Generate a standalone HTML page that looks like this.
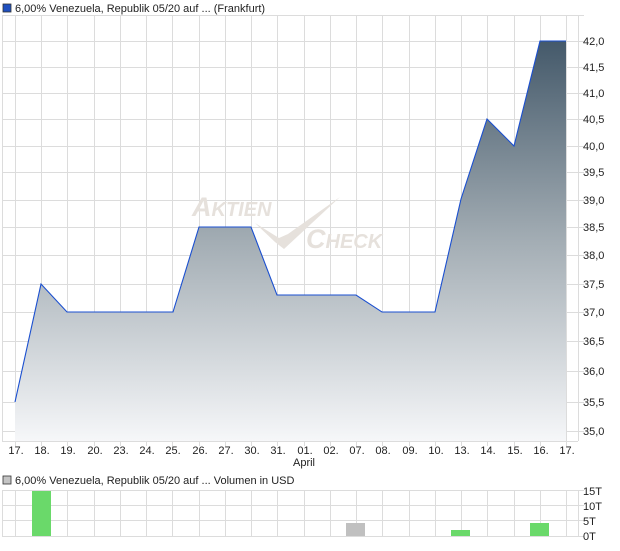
<!DOCTYPE html><html><head><style>body{margin:0;background:#fff;width:620px;height:546px;overflow:hidden;font-family:"Liberation Sans",sans-serif}</style></head><body>
<svg width="620" height="546" xmlns="http://www.w3.org/2000/svg" font-family="Liberation Sans, sans-serif" font-size="11" fill="#222">
<defs><linearGradient id="g" gradientUnits="userSpaceOnUse" x1="0" y1="41" x2="0" y2="441"><stop offset="0" stop-color="#44596a"/><stop offset="0.5" stop-color="#a3adb4"/><stop offset="1" stop-color="#f6f7f9"/></linearGradient></defs>
<rect x="3" y="4" width="8" height="8" fill="#1f4fbf" stroke="#333" stroke-width="0.8"/>
<text x="15" y="12">6,00% Venezuela, Republik 05/20 auf ... (Frankfurt)</text>
<g stroke="#dcdcdc">
<line x1="2.5" y1="15" x2="2.5" y2="441"/><line x1="2" y1="441.5" x2="578" y2="441.5"/><line x1="578.5" y1="15" x2="578.5" y2="441"/>
<line x1="2" y1="15.5" x2="584" y2="15.5"/>
<line x1="2" y1="41.5" x2="584" y2="41.5"/><line x1="2" y1="67.5" x2="584" y2="67.5"/><line x1="2" y1="93.5" x2="584" y2="93.5"/><line x1="2" y1="119.5" x2="584" y2="119.5"/><line x1="2" y1="146.5" x2="584" y2="146.5"/><line x1="2" y1="172.5" x2="584" y2="172.5"/><line x1="2" y1="200.5" x2="584" y2="200.5"/><line x1="2" y1="227.5" x2="584" y2="227.5"/><line x1="2" y1="255.5" x2="584" y2="255.5"/><line x1="2" y1="284.5" x2="584" y2="284.5"/><line x1="2" y1="312.5" x2="584" y2="312.5"/><line x1="2" y1="341.5" x2="584" y2="341.5"/><line x1="2" y1="371.5" x2="584" y2="371.5"/><line x1="2" y1="402.5" x2="584" y2="402.5"/><line x1="2" y1="431.5" x2="584" y2="431.5"/>
<line x1="15.5" y1="15" x2="15.5" y2="446"/><line x1="41.5" y1="15" x2="41.5" y2="446"/><line x1="67.5" y1="15" x2="67.5" y2="446"/><line x1="94.5" y1="15" x2="94.5" y2="446"/><line x1="120.5" y1="15" x2="120.5" y2="446"/><line x1="146.5" y1="15" x2="146.5" y2="446"/><line x1="172.5" y1="15" x2="172.5" y2="446"/><line x1="199.5" y1="15" x2="199.5" y2="446"/><line x1="225.5" y1="15" x2="225.5" y2="446"/><line x1="251.5" y1="15" x2="251.5" y2="446"/><line x1="277.5" y1="15" x2="277.5" y2="446"/><line x1="304.5" y1="15" x2="304.5" y2="446"/><line x1="330.5" y1="15" x2="330.5" y2="446"/><line x1="356.5" y1="15" x2="356.5" y2="446"/><line x1="382.5" y1="15" x2="382.5" y2="446"/><line x1="409.5" y1="15" x2="409.5" y2="446"/><line x1="435.5" y1="15" x2="435.5" y2="446"/><line x1="461.5" y1="15" x2="461.5" y2="446"/><line x1="487.5" y1="15" x2="487.5" y2="446"/><line x1="514.5" y1="15" x2="514.5" y2="446"/><line x1="540.5" y1="15" x2="540.5" y2="446"/><line x1="566.5" y1="15" x2="566.5" y2="446"/>
</g>
<g fill="#e6e1dc" font-style="italic" font-weight="bold">
<text x="192" y="216" font-size="27">A<tspan font-size="20">KTIEN</tspan></text>
<text x="306" y="248" font-size="27">C<tspan font-size="20">HECK</tspan></text>
</g>
<path d="M255,223 L275,242 L284,249 L340,197 L288,234 L279,238 Z" fill="#e6e1dc"/>
<path d="M15,441 L15,402 L41,284 L67,312 L173,312 L199,227 L251,227 L277,295 L356,295 L382,312 L435,312 L461,199 L487,119 L514,146 L540,41 L566,41 L566,441 Z" fill="url(#g)"/>
<path d="M15,402 L41,284 L67,312 L173,312 L199,227 L251,227 L277,295 L356,295 L382,312 L435,312 L461,199 L487,119 L514,146 L540,41 L566,41" fill="none" stroke="#1a4fd0" stroke-width="1.1"/>
<g>
<text x="583" y="45">42,0</text><text x="583" y="71">41,5</text><text x="583" y="97">41,0</text><text x="583" y="123">40,5</text><text x="583" y="150">40,0</text><text x="583" y="176">39,5</text><text x="583" y="204">39,0</text><text x="583" y="231">38,5</text><text x="583" y="259">38,0</text><text x="583" y="288">37,5</text><text x="583" y="316">37,0</text><text x="583" y="345">36,5</text><text x="583" y="375">36,0</text><text x="583" y="406">35,5</text><text x="583" y="435">35,0</text>
</g>
<g text-anchor="middle">
<text x="16" y="454">17.</text><text x="42" y="454">18.</text><text x="68" y="454">19.</text><text x="95" y="454">20.</text><text x="121" y="454">23.</text><text x="147" y="454">24.</text><text x="173" y="454">25.</text><text x="200" y="454">26.</text><text x="226" y="454">27.</text><text x="252" y="454">30.</text><text x="278" y="454">31.</text><text x="305" y="454">01.</text><text x="331" y="454">02.</text><text x="357" y="454">07.</text><text x="383" y="454">08.</text><text x="410" y="454">09.</text><text x="436" y="454">10.</text><text x="462" y="454">13.</text><text x="488" y="454">14.</text><text x="515" y="454">15.</text><text x="541" y="454">16.</text><text x="567" y="454">17.</text>
<text x="304" y="466">April</text>
</g>
<rect x="3" y="476" width="8" height="8" fill="#c4c4c4" stroke="#333" stroke-width="0.8"/>
<text x="15" y="484">6,00% Venezuela, Republik 05/20 auf ... Volumen in USD</text>
<g stroke="#dcdcdc">
<line x1="2" y1="490.5" x2="584" y2="490.5"/><line x1="2" y1="505.5" x2="584" y2="505.5"/><line x1="2" y1="520.5" x2="584" y2="520.5"/><line x1="2" y1="536.5" x2="584" y2="536.5"/>
<line x1="2.5" y1="490" x2="2.5" y2="536"/><line x1="578.5" y1="490" x2="578.5" y2="536"/>
<line x1="15.5" y1="490" x2="15.5" y2="536"/><line x1="41.5" y1="490" x2="41.5" y2="536"/><line x1="67.5" y1="490" x2="67.5" y2="536"/><line x1="94.5" y1="490" x2="94.5" y2="536"/><line x1="120.5" y1="490" x2="120.5" y2="536"/><line x1="146.5" y1="490" x2="146.5" y2="536"/><line x1="172.5" y1="490" x2="172.5" y2="536"/><line x1="199.5" y1="490" x2="199.5" y2="536"/><line x1="225.5" y1="490" x2="225.5" y2="536"/><line x1="251.5" y1="490" x2="251.5" y2="536"/><line x1="277.5" y1="490" x2="277.5" y2="536"/><line x1="304.5" y1="490" x2="304.5" y2="536"/><line x1="330.5" y1="490" x2="330.5" y2="536"/><line x1="356.5" y1="490" x2="356.5" y2="536"/><line x1="382.5" y1="490" x2="382.5" y2="536"/><line x1="409.5" y1="490" x2="409.5" y2="536"/><line x1="435.5" y1="490" x2="435.5" y2="536"/><line x1="461.5" y1="490" x2="461.5" y2="536"/><line x1="487.5" y1="490" x2="487.5" y2="536"/><line x1="514.5" y1="490" x2="514.5" y2="536"/><line x1="540.5" y1="490" x2="540.5" y2="536"/><line x1="566.5" y1="490" x2="566.5" y2="536"/>
</g>
<rect x="32" y="491" width="19" height="45" fill="#6ad96a"/>
<rect x="346" y="523" width="19" height="13" fill="#c0c0c0"/>
<rect x="451" y="530" width="19" height="6" fill="#6ad96a"/>
<rect x="530" y="523" width="19" height="13" fill="#6ad96a"/>
<text x="583" y="495">15T</text><text x="583" y="510">10T</text><text x="583" y="525">5T</text><text x="583" y="540">0T</text>
</svg>
</body></html>
